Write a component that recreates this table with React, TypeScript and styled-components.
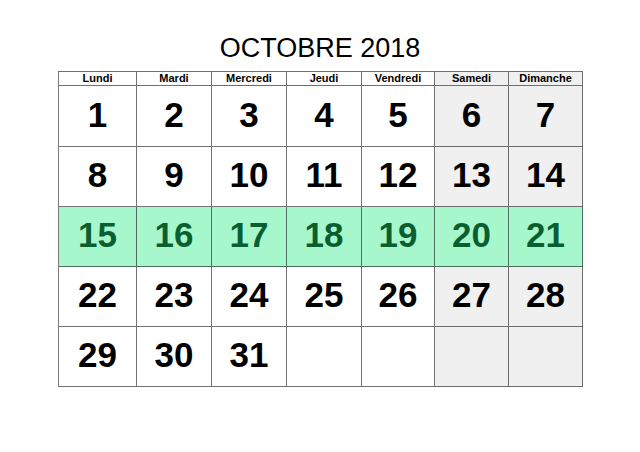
import styled, { createGlobalStyle } from 'styled-components';

const DAYS = ['Lundi', 'Mardi', 'Mercredi', 'Jeudi', 'Vendredi', 'Samedi', 'Dimanche'];
const FIRST_WEEKDAY = 0; // 1er octobre 2018 = lundi
const DAYS_IN_MONTH = 31;
const HIGHLIGHT_WEEK = 2;

const GlobalStyle = createGlobalStyle`
  html, body {
    margin: 0;
    padding: 0;
    background: #ffffff;
  }
  body {
    font-family: 'Liberation Sans', Arial, sans-serif;
  }
`;

const buildWeeks = () => {
  const cells: (number | null)[] = [];
  for (let i = 0; i < FIRST_WEEKDAY; i++) cells.push(null);
  for (let d = 1; d <= DAYS_IN_MONTH; d++) cells.push(d);
  while (cells.length % 7 !== 0) cells.push(null);
  const weeks: (number | null)[][] = [];
  for (let i = 0; i < cells.length; i += 7) weeks.push(cells.slice(i, i + 7));
  return weeks;
};

const App: React.FC = () => {
  const weeks = buildWeeks();

  return (
    <Page>
      <GlobalStyle />
      <Title>OCTOBRE 2018</Title>
      <Grid>
        {DAYS.map((day, i) => (
          <HeadCell key={day} $weekend={i >= 5}>
            {day}
          </HeadCell>
        ))}
        {weeks.map((week, w) =>
          week.map((day, i) => (
            <DayCell
              key={`${w}-${i}`}
              $weekend={i >= 5}
              $highlight={w === HIGHLIGHT_WEEK}
            >
              {day ?? ''}
            </DayCell>
          ))
        )}
      </Grid>
    </Page>
  );
};

const Page = styled.div`
  width: 640px;
  height: 452px;
  padding-top: 33px;
  box-sizing: border-box;
  background: #ffffff;
`;

const Title = styled.h1`
  margin: 0 0 7px 0;
  height: 31px;
  font-size: 27px;
  line-height: 31px;
  font-weight: normal;
  text-align: center;
  color: #000000;
`;

const Grid = styled.div`
  display: grid;
  grid-template-columns: 78px 75px 75px 75px 73px 74px 74px;
  grid-template-rows: 14px 61px 60px 60px 60px 60px;
  width: 525px;
  margin-left: 58px;
  box-sizing: border-box;
  border-top: 1px solid #6f6f6f;
  border-left: 1px solid #7a7a7a;
`;

const HeadCell = styled.div<{ $weekend: boolean }>`
  box-sizing: border-box;
  border-right: 1px solid #6f6f6f;
  border-bottom: 1px solid #6f6f6f;
  background: ${(p) => (p.$weekend ? '#f0f0f0' : '#ffffff')};
  font-size: 11px;
  line-height: 13px;
  font-weight: bold;
  text-align: center;
  color: #000000;
`;

const DayCell = styled.div<{ $weekend: boolean; $highlight: boolean }>`
  box-sizing: border-box;
  border-right: 1px solid rgba(0, 0, 0, 0.55);
  border-bottom: 1px solid rgba(0, 0, 0, 0.55);
  display: flex;
  align-items: center;
  justify-content: center;
  background: ${(p) =>
    p.$highlight ? '#a7f7cc' : p.$weekend ? '#f0f0f0' : '#ffffff'};
  color: ${(p) => (p.$highlight ? '#0a5f31' : '#000000')};
  font-size: 35px;
  font-weight: bold;
  padding-bottom: 3px;
`;

export default App;
